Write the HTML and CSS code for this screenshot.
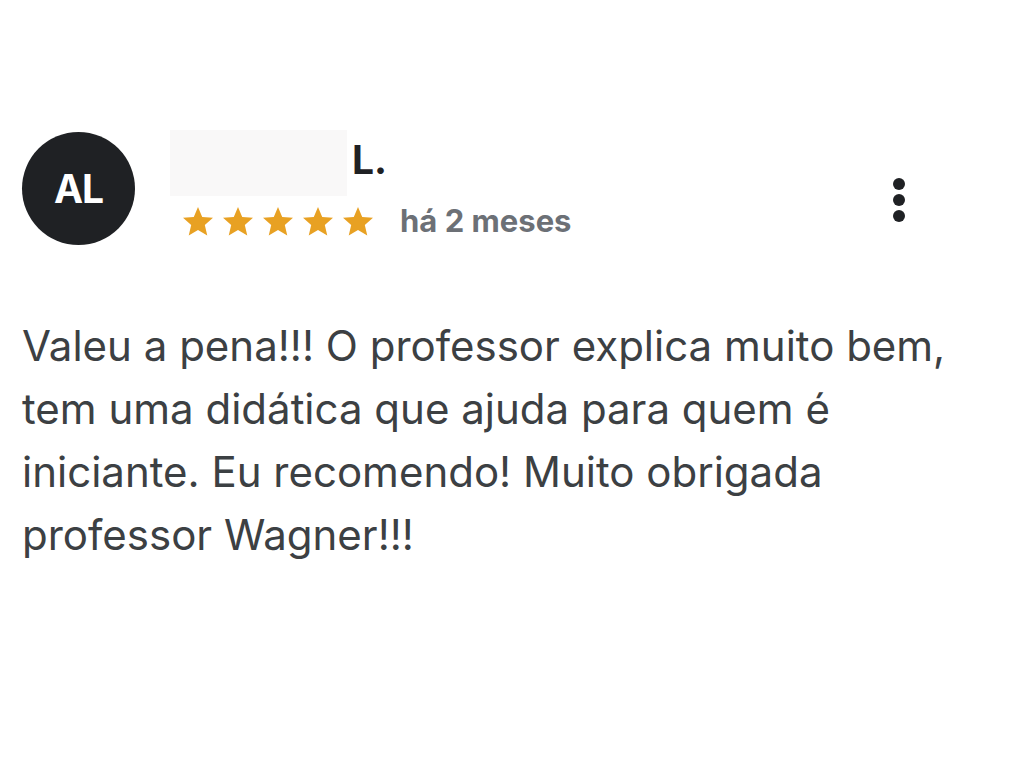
FILE: index.html
```html
<!DOCTYPE html>
<html lang="pt">
<head>
<meta charset="utf-8">
<link rel="stylesheet" href="styles.css">
</head>
<body>
<div class="review">
  <div class="header">
    <div class="avatar">AL</div>
    <div class="meta">
      <div class="name-row"><span class="redact"></span><span class="name">L.</span></div>
      <div class="rating-row">
        <div class="stars">
          <svg viewBox="0 0 24 24"><path d="M12 17.27L18.180 21l-1.64-7.03L22 9.24l-7.19-.61L12 2 9.19 8.63 2 9.24l5.46 4.73L5.82 21z"/></svg>
          <svg viewBox="0 0 24 24"><path d="M12 17.27L18.18 21l-1.64-7.03L22 9.24l-7.19-.61L12 2 9.19 8.63 2 9.24l5.46 4.73L5.82 21z"/></svg>
          <svg viewBox="0 0 24 24"><path d="M12 17.27L18.18 21l-1.64-7.03L22 9.24l-7.19-.61L12 2 9.19 8.63 2 9.24l5.46 4.73L5.82 21z"/></svg>
          <svg viewBox="0 0 24 24"><path d="M12 17.27L18.18 21l-1.64-7.03L22 9.24l-7.19-.61L12 2 9.19 8.63 2 9.24l5.46 4.73L5.82 21z"/></svg>
          <svg viewBox="0 0 24 24"><path d="M12 17.27L18.18 21l-1.64-7.03L22 9.24l-7.19-.61L12 2 9.19 8.63 2 9.24l5.46 4.73L5.82 21z"/></svg>
        </div>
        <span class="date">há 2 meses</span>
      </div>
    </div>
    <div class="more"><span></span><span></span><span></span></div>
  </div>
  <p class="text">Valeu a pena!!! O professor explica muito bem, tem uma didática que ajuda para quem é iniciante. Eu recomendo! Muito obrigada professor Wagner!!!</p>
</div>
</body>
</html>
```

FILE: styles.css
```css
html, body {
  margin: 0;
  padding: 0;
  background: #ffffff;
}
body {
  font-family: Inter, "Liberation Sans", Arial, sans-serif;
}
.review {
  padding: 130px 20px 0 22px;
}
.header {
  display: flex;
  align-items: flex-start;
}
.avatar {
  width: 113px;
  height: 113px;
  margin-top: 2px;
  border-radius: 50%;
  background: #1f2124;
  color: #ffffff;
  font-weight: 700;
  font-size: 39px;
  letter-spacing: -1px;
  display: flex;
  align-items: center;
  justify-content: center;
  flex-shrink: 0;
}
.meta {
  margin-left: 35px;
  flex: 1;
}
.name-row {
  display: flex;
  align-items: flex-start;
  height: 66px;
}
.redact {
  width: 177px;
  height: 66px;
  background: #f9f8f8;
}
.name {
  font-weight: 700;
  font-size: 39px;
  line-height: 1;
  color: #1f2124;
  margin-left: 5px;
  margin-top: 10px;
}
.rating-row {
  display: flex;
  align-items: center;
  margin-top: 8px;
  margin-left: 10px;
}
.stars {
  display: flex;
  gap: 4px;
}
.stars svg {
  width: 36px;
  height: 36px;
  fill: #e8a123;
}
.date {
  margin-left: 24px;
  margin-top: -4px;
  font-size: 31px;
  font-weight: 700;
  color: #6c7076;
}
.more {
  width: 24px;
  display: flex;
  flex-direction: column;
  align-items: center;
  gap: 4px;
  margin-top: 48px;
  margin-right: 93px;
}
.more span {
  width: 12px;
  height: 12px;
  border-radius: 50%;
  background: #1f2124;
}
.text {
  margin: 69px 0 0 0;
  font-size: 42px;
  line-height: 63px;
  color: #3c4043;
  max-width: 960px;
}
```
